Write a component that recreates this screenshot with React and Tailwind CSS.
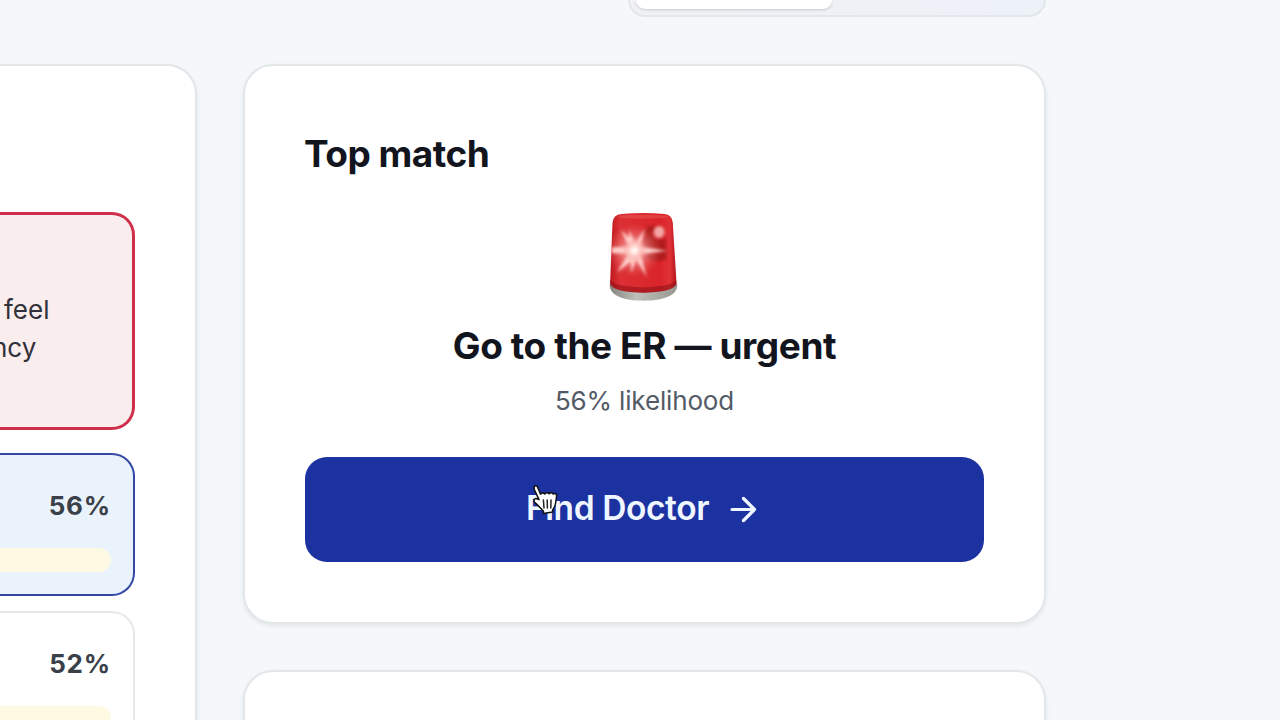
import React from "react";

const matches = [
  { id: 1, percent: "56%", active: true },
  { id: 2, percent: "52%", active: false },
];

function SirenIcon() {
  return (
    <svg
      width="74"
      height="96"
      viewBox="0 0 216 288"
      preserveAspectRatio="none"
      className="-mt-[2px] mr-[2px] block"
    >
      <defs>
        <linearGradient id="glass" x1="0" x2="1" y1="0" y2="0">
          <stop offset="0" stopColor="#bd1a20" />
          <stop offset="0.15" stopColor="#dc3035" />
          <stop offset="0.75" stopColor="#d9242a" />
          <stop offset="0.9" stopColor="#e03237" />
          <stop offset="1" stopColor="#b3141b" />
        </linearGradient>
        <linearGradient id="base" x1="0" x2="1" y1="0" y2="0">
          <stop offset="0" stopColor="#858380" />
          <stop offset="0.4" stopColor="#bfc0bb" />
          <stop offset="1" stopColor="#989792" />
        </linearGradient>
        <radialGradient id="glow">
          <stop offset="0" stopColor="#ffffff" />
          <stop offset="0.3" stopColor="#ffe3df" stopOpacity="0.9" />
          <stop offset="1" stopColor="#f77f78" stopOpacity="0" />
        </radialGradient>
        <filter id="soft" x="-20%" y="-20%" width="140%" height="140%">
          <feGaussianBlur stdDeviation="4" />
        </filter>
      </defs>
      <path d="M8 228C6 264 50 278 106 278S208 264 205 228Z" fill="url(#base)" />
      <path
        d="M16 44Q18 20 42 18Q105 12 168 18Q190 20 192 44L203 226Q196 252 106 254Q16 252 9 226Z"
        fill="url(#glass)"
      />
      <path
        d="M10 216Q24 236 106 238Q188 236 202 216L203 228Q194 253 106 254Q18 253 9 228Z"
        fill="#8c1015"
        opacity="0.55"
      />
      <ellipse cx="105" cy="26" rx="74" ry="6" fill="#ee6664" opacity="0.4" />
      <path
        d="M108 68Q124 46 146 56Q132 74 138 88Q156 102 172 88L174 152Q146 168 116 150L108 128Z"
        fill="#a01318"
        opacity="0.7"
        filter="url(#soft)"
      />
      <ellipse
        cx="152"
        cy="72"
        rx="16"
        ry="18"
        fill="#f4a5a5"
        filter="url(#soft)"
      />
      <circle cx="80" cy="127" r="80" fill="url(#glow)" opacity="0.6" />
      <path
        d="M84 116L14 118V136L84 138ZM70 128L40 66L94 116ZM74 120L110 62L94 128ZM84 115L176 128L84 140ZM69 126L28 194L94 140ZM74 134L116 208L94 122ZM68 122L64 66L92 124ZM70 132L70 196L94 130Z"
        fill="#ffcfca"
        filter="url(#soft)"
      />
      <circle cx="80" cy="127" r="36" fill="url(#glow)" />
    </svg>
  );
}

function HandCursor() {
  return (
    <svg
      width="28"
      height="32"
      viewBox="0 0 28 32"
      className="absolute left-[226px] top-[27px]"
    >
      <path
        d="M3.2 2.6C4.4 1.2 6 1.8 6.6 3.2L9.6 10.2C10.8 8.6 13 8.8 13.8 10C15 8.4 17.2 8.4 18.2 9.8C19.4 8.4 21.4 8.6 22 10C24 8.8 26 9.8 25.6 12L24.6 19C24.4 22.4 23 24 21.6 26V28L12.4 29.5V27C10 25 8 22 4 18.6C2 16.8 3.4 13.8 6 14.8L8 15.6L3.2 5.4Z"
        fill="#fff"
        stroke="#111"
        strokeWidth="1.5"
        strokeLinejoin="round"
      />
      <path
        d="M12.4 16L13 24M16.2 16L16.4 24M20 16L19.8 24"
        stroke="#222"
        strokeWidth="1.5"
        strokeLinecap="round"
      />
    </svg>
  );
}

function MatchRow({ percent, active }) {
  return (
    <div
      className={`h-[143px] w-[135px] shrink-0 rounded-r-[23px] border-2 border-l-0 pr-[22px] ${
        active ? "border-[#3348a4] bg-[#eaf2fc]" : "border-[#e7e8eb] bg-white"
      }`}
    >
      <div className="mt-[31px] flex h-[38px] items-center justify-end text-[26px] font-bold tracking-[0.8px] text-[#3a4048]">
        {percent}
      </div>
      <div className="mt-[24px] h-6 rounded-r-full bg-[#fef9e3]" />
    </div>
  );
}

function App() {
  return (
    <div className="h-[720px] w-[1280px] overflow-hidden bg-[#f4f8fa] font-['Inter',sans-serif]">
      {/* view switch */}
      <div className="ml-[628px] h-[17px] w-[418px] rounded-b-[20px] border-2 border-t-0 border-[#e3e7ea] bg-gradient-to-r from-[#eff1f4] to-[#edf1f8] pl-[6px]">
        <div className="h-[9px] w-[196px] rounded-b-[14px] bg-white shadow-[0_1px_3px_rgba(0,0,0,0.16)]" />
      </div>

      <div className="mt-[47px] flex items-start gap-[46px]">
        <div className="flex h-[700px] w-[197px] shrink-0 flex-col rounded-tr-[30px] border-2 border-b-0 border-l-0 border-[#e3e7ea] bg-white pt-[146px] shadow-[0_2px_4px_rgba(0,0,0,0.07)]">
          <div className="h-[218px] w-[135px] shrink-0 rounded-r-[23px] border-3 border-l-0 border-[#d02f4b] bg-[#faedee] pt-[76px] text-[26px] leading-[38px] text-[#30313a]">
            <p className="ml-[4px]">feel</p>
            <p className="-ml-[8px]">ncy</p>
          </div>
          <div className="mt-[23px] flex flex-col gap-[15px]">
            {matches.map((item) => (
              <MatchRow
                key={item.id}
                percent={item.percent}
                active={item.active}
              />
            ))}
          </div>
        </div>

        <div className="flex w-[803px] shrink-0 flex-col gap-[46px]">
          <div className="flex h-[560px] flex-col rounded-[30px] border-2 border-[#e3e7ea] bg-white px-[60px] shadow-[0_2px_4px_rgba(0,0,0,0.08)]">
            <h2 className="-ml-px mt-[62px] text-[37px] font-bold leading-[52px] tracking-[-0.5px] text-[#12151d]">
              Top match
            </h2>
            <div className="mt-[30px] flex flex-col items-center">
              <SirenIcon />
              <h3 className="mt-[16px] text-[37px] font-bold leading-[52px] tracking-[-0.4px] text-[#12151d]">
                Go to the ER — urgent
              </h3>
              <p className="mt-[10px] text-[26px] leading-[38px] tracking-[-0.15px] text-[#525b66]">
                56% likelihood
              </p>
            </div>
            <button className="relative mt-[37px] flex h-[105px] w-full items-center justify-center gap-[19px] rounded-[22px] bg-[#1c32a1] pb-[2px] pr-[5px] text-[33.5px] font-semibold tracking-[-0.4px] text-[#eff6ff]">
              Find Doctor
              <svg
                width="30"
                height="30"
                viewBox="0 0 30 30"
                fill="none"
                stroke="currentColor"
                strokeWidth="3.2"
                strokeLinecap="round"
                strokeLinejoin="round"
              >
                <path d="M4 15.5H26.5M15.5 4.5L26.5 15.5L15.5 26.5" />
              </svg>
              <HandCursor />
            </button>
          </div>
          <div className="h-[120px] rounded-t-[30px] border-2 border-[#e3e7ea] bg-white shadow-[0_2px_4px_rgba(0,0,0,0.08)]" />
        </div>
      </div>
    </div>
  );
}

export default App;
